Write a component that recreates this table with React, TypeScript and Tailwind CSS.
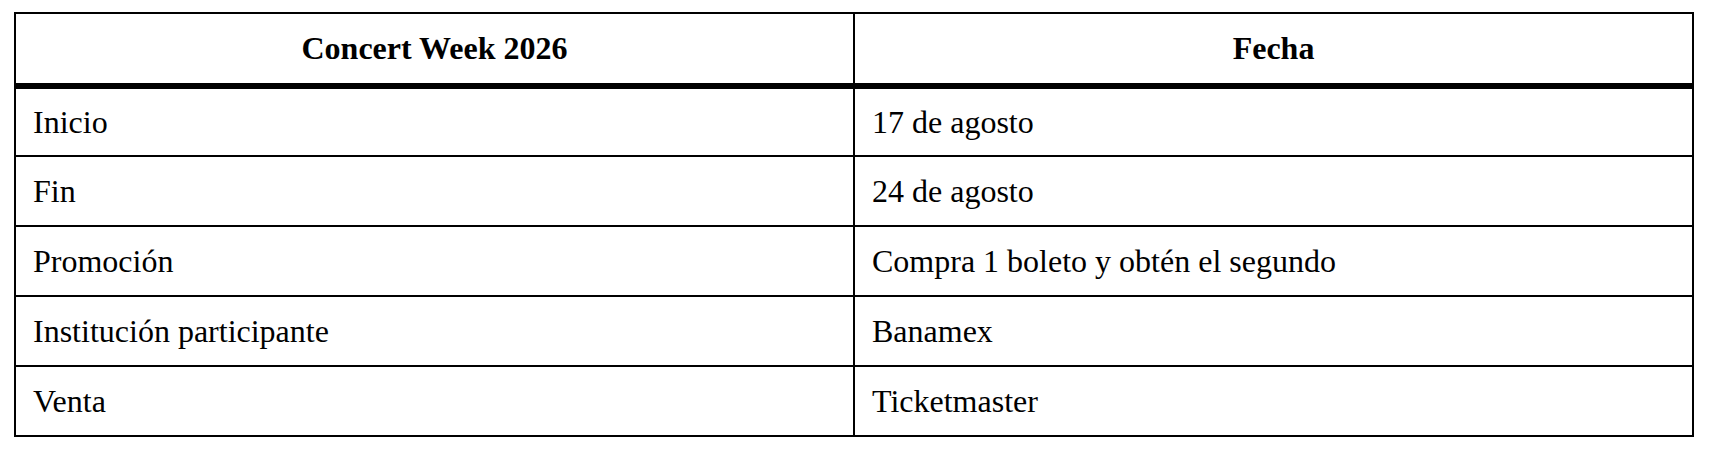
import React from 'react';

const rows: [string, string][] = [
  ['Inicio', '17 de agosto'],
  ['Fin', '24 de agosto'],
  ['Promoción', 'Compra 1 boleto y obtén el segundo'],
  ['Institución participante', 'Banamex'],
  ['Venta', 'Ticketmaster'],
];

const App: React.FC = () => {
  return (
    <div className="min-h-screen bg-white pl-[14px] pt-[12px] font-['Liberation_Serif','Times_New_Roman',serif] text-black">
      <table className="w-[1680px] table-fixed border-collapse border-2 border-black text-[32px] leading-[1.15]">
        <thead>
          <tr className="h-[73px]">
            <th className="w-1/2 border-2 border-b-[6px] border-black px-[17px] text-center font-bold">
              Concert Week 2026
            </th>
            <th className="w-1/2 border-2 border-b-[6px] border-black px-[17px] text-center font-bold">
              Fecha
            </th>
          </tr>
        </thead>
        <tbody>
          {rows.map(([label, value]) => (
            <tr key={label} className="h-[70px]">
              <td className="border-2 border-black px-[17px] text-left">{label}</td>
              <td className="border-2 border-black px-[17px] text-left">{value}</td>
            </tr>
          ))}
        </tbody>
      </table>
    </div>
  );
};

export default App;
